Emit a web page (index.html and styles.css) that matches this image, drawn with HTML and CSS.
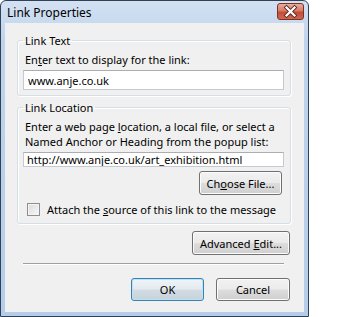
FILE: index.html
```html
<!DOCTYPE html>
<html lang="en">
<head>
    <meta charset="UTF-8">
    <title>Link Properties</title>
    <link rel="stylesheet" href="styles.css">
</head>
<body>
    <div class="window">
        <div class="titlebar">
            <span class="title">Link Properties</span>
            <button class="close" aria-label="Close">
                <svg width="27" height="17" viewBox="0 0 27 17">
                    <path d="M9.5 4.5 L17.5 12.5 M17.5 4.5 L9.5 12.5" stroke="#5b2a22" stroke-width="4" stroke-linecap="square"/>
                    <path d="M9.5 4.5 L17.5 12.5 M17.5 4.5 L9.5 12.5" stroke="#fff" stroke-width="2.2" stroke-linecap="square"/>
                </svg>
            </button>
        </div>

        <div class="client">
            <fieldset class="group group-text">
                <legend>Link Text</legend>
                <div class="line">En<u>t</u>er text to display for the link:</div>
                <input class="field" type="text" value="www.anje.co.uk">
            </fieldset>

            <fieldset class="group group-location">
                <legend>Link Location</legend>
                <div class="line">Enter a web page <u>l</u>ocation, a local file, or select a</div>
                <div class="line">Named Anchor or Heading from the popup list:</div>
                <input class="field field-small" type="text" value="http://www.anje.co.uk/art_exhibition.html">
                <div class="row-end">
                    <button class="btn btn-choose">Ch<u>o</u>ose File...</button>
                </div>
                <label class="check">
                    <span class="box"></span>
                    <span class="check-text">Attach the <u>s</u>ource of this link to the message</span>
                </label>
            </fieldset>

            <div class="row-end advanced">
                <button class="btn btn-advanced">Advanced <u>E</u>dit...</button>
            </div>

            <div class="separator"></div>

            <div class="row-end actions">
                <button class="btn btn-default">OK</button>
                <button class="btn btn-cancel">Cancel</button>
            </div>
        </div>
    </div>
</body>
</html>
```

FILE: styles.css
```css
* {
    box-sizing: border-box;
    margin: 0;
    padding: 0;
}

body {
    background: #fff;
    font-family: 'Noto Sans', 'Open Sans', sans-serif;
    font-size: 11px;
    color: #000;
}

.window {
    width: 309px;
    height: 317px;
    border: 1px solid #2f4257;
    border-radius: 6px 6px 0 0;
    background: linear-gradient(#d3e1f2, #bfd4ec 40px, #b6cde9);
    padding: 0 4px 4px;
    display: flex;
    flex-direction: column;
}

.titlebar {
    height: 22px;
    display: flex;
    justify-content: space-between;
    align-items: flex-start;
}

.title {
    padding: 4px 0 0 2px;
    font-size: 12px;
    line-height: 16px;
}

.close {
    margin-top: 2px;
    width: 27px;
    height: 17px;
    border: 1px solid #7a3326;
    border-radius: 3px;
    background: linear-gradient(#e9ad9f, #d77a66 45%, #c44c36 55%, #d16750);
    display: flex;
    align-items: center;
    justify-content: center;
}

.close svg {
    display: block;
    margin: -1px;
}

.client {
    flex: 1;
    background: #f0f0f0;
    padding: 0 13px 0 12px;
    display: flex;
    flex-direction: column;
}

.group {
    border: 1px solid #d5dfe5;
    border-radius: 3px;
    box-shadow: inset 1px 1px 0 #fff, 1px 1px 0 #fff;
    padding: 4px 6px 5px 5px;
    display: flex;
    flex-direction: column;
}

.group legend {
    padding: 0 2px;
    line-height: 15px;
}

.group-text {
    margin-top: 10px;
}

.group-location {
    margin-top: 4px;
    padding-bottom: 6px;
}

.line {
    padding-left: 2px;
    line-height: 15px;
}

.field {
    margin-top: 3px;
    width: 100%;
    height: 20px;
    border: 1px solid #c5c9d2;
    border-top-color: #abadb3;
    background: #fff;
    font: inherit;
    padding: 0 4px;
    outline: none;
}

.field-small {
    height: 15px;
    padding: 0 3px;
    line-height: 13px;
}

.row-end {
    display: flex;
    justify-content: flex-end;
}

.btn {
    height: 24px;
    border: 1px solid #707070;
    border-radius: 3px;
    background: linear-gradient(#f2f2f2, #ebebeb 48%, #dddddd 52%, #cfcfcf);
    box-shadow: inset 0 0 0 1px #fcfcfc;
    font: inherit;
    color: #000;
}

.btn-choose {
    margin: 4px 2px 0 0;
    width: 83px;
}

.check {
    margin-top: 7px;
    padding-left: 4px;
    display: flex;
    align-items: center;
    gap: 7px;
    line-height: 15px;
}

.box {
    flex: none;
    width: 13px;
    height: 13px;
    border: 1px solid #8f8f8f;
    background: linear-gradient(135deg, #dcdcdc, #f7f7f7);
    box-shadow: inset 0 0 0 1px #f4f4f4;
}

.check-text {
    white-space: nowrap;
}

.advanced {
    margin: 7px 1px 0 0;
}

.btn-advanced {
    width: 98px;
}

.separator {
    margin: 8px 7px 0 6px;
    height: 2px;
    border-top: 1px solid #a0a0a0;
    border-bottom: 1px solid #fff;
}

.actions {
    margin: 13px 1px 0 0;
    gap: 12px;
}

.btn-default,
.btn-cancel {
    height: 23px;
    width: 73px;
}

.btn-cancel {
    width: 74px;
}

.btn-default {
    border-color: #3c7fb1;
    box-shadow: inset 0 0 0 1px #b8e4f7;
    background: linear-gradient(#eef4f8, #e4ebf0 48%, #d3dce2 52%, #c6d2da);
}
```
